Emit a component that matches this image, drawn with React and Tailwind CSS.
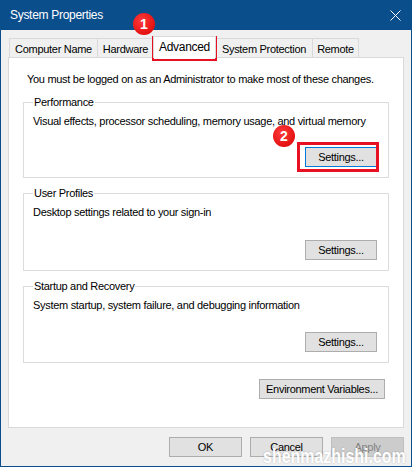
import React from 'react';

function Btn({ children, className = '', focused = false, disabled = false }) {
  return (
    <div
      className={
        'h-[20px] flex items-center justify-center border leading-[15px] whitespace-nowrap ' +
        (disabled
          ? 'bg-[#cccccc] border-[#bfbfbf] text-[#838383] '
          : focused
          ? 'bg-[#e1e1e1] border-[#0078d7] '
          : 'bg-[#e1e1e1] border-[#adadad] ') +
        className
      }
    >
      {children}
    </div>
  );
}

function Group({ title, text, gap, focused }) {
  return (
    <fieldset className="border border-[#dcdcdc] mx-[14px] px-[9px] pb-[10px]">
      <legend className="px-[1px] leading-[15px]">{title}</legend>
      <div className="pt-[4px] leading-[15px] whitespace-nowrap">{text}</div>
      <div className={'flex justify-end pr-[2px] ' + gap}>
        <Btn className="w-[72px]" focused={focused}>
          Settings...
        </Btn>
      </div>
    </fieldset>
  );
}

function Badge({ n, className }) {
  return (
    <div
      className={
        'absolute w-[22px] h-[22px] rounded-full bg-[radial-gradient(circle_at_40%_35%,#ff3b3b,#d80000)] text-white font-bold text-[14px] tracking-normal flex items-center justify-center ' +
        className
      }
    >
      {n}
    </div>
  );
}

export default function App() {
  const tabs = [
    { label: 'Computer Name', w: 'w-[88px]', cls: 'border-l border-t' },
    { label: 'Hardware', w: 'w-[56px]', cls: 'border-l border-t' },
    { label: 'Advanced', w: 'w-[63px]', active: true },
    { label: 'System Protection', w: 'w-[96px]', cls: 'border-t' },
    { label: 'Remote', w: 'w-[47px]', cls: 'border-l border-t border-r' },
  ];

  return (
    <div className="relative w-[412px] h-[467px] overflow-hidden bg-[#0a4e8c] flex flex-col px-px pb-px font-['Liberation_Sans',sans-serif] text-[11px] tracking-[-0.3px] text-black">
      {/* title bar */}
      <div className="h-[30px] shrink-0 flex items-center justify-between pl-[9px] pr-[10px] text-white">
        <span className="text-[12px]">System Properties</span>
        <svg width="11" height="11" viewBox="0 0 11 11" fill="none" stroke="white" strokeWidth="1">
          <path d="M0.5 0.5 L10.5 10.5 M10.5 0.5 L0.5 10.5" />
        </svg>
      </div>

      <div className="flex-1 bg-[#f0f0f0] flex flex-col px-[7px]">
        {/* tabs */}
        <div className="mt-[6px] h-[21px] flex items-end pl-[1px]">
          {tabs.map((t) =>
            t.active ? (
              <div
                key={t.label}
                className={t.w + ' h-[22px] -mb-px relative z-10 bg-white border-x border-t border-[#d9d9d9] flex justify-center pt-[3px] leading-[15px] text-[12px]'}
              >
                {t.label}
              </div>
            ) : (
              <div
                key={t.label}
                className={t.w + ' h-[19px] border-[#d9d9d9] flex justify-center pt-[3px] leading-[15px] ' + t.cls}
              >
                {t.label}
              </div>
            )
          )}
        </div>

        {/* tab page */}
        <div className="w-[396px] h-[371px] bg-white border border-[#d9d9d9] flex flex-col">
          <div className="pt-[14px] pl-[18px] leading-[15px] whitespace-nowrap">
            You must be logged on as an Administrator to make most of these changes.
          </div>
          <div className="mt-[8px] flex flex-col gap-[8px]">
            <Group
              title="Performance"
              text="Visual effects, processor scheduling, memory usage, and virtual memory"
              gap="mt-[18px]"
              focused
            />
            <Group title="User Profiles" text="Desktop settings related to your sign-in" gap="mt-[20px]" />
            <Group
              title="Startup and Recovery"
              text="System startup, system failure, and debugging information"
              gap="mt-[19px]"
            />
          </div>
          <div className="mt-[16px] flex justify-end pr-[18px]">
            <Btn className="w-[126px]">Environment Variables...</Btn>
          </div>
        </div>

        {/* dialog buttons */}
        <div className="mt-[9px] flex justify-end gap-[8px]">
          <Btn className="w-[73px]">OK</Btn>
          <Btn className="w-[73px]">Cancel</Btn>
          <Btn className="w-[73px]" disabled>
            Apply
          </Btn>
        </div>
      </div>

      {/* callouts */}
      <div className="absolute left-[152px] top-[36px] w-[65px] h-[25px] border-2 border-[#e81123]" />
      <Badge n="1" className="left-[133px] top-[13px]" />
      <div className="absolute left-[297px] top-[142px] w-[82px] h-[30px] border-[3px] border-[#e81123]" />
      <Badge n="2" className="left-[273px] top-[125px]" />

      <div className="absolute left-[263px] top-[444px] origin-left scale-x-[0.76] text-white font-bold text-[21px] tracking-normal leading-[23px] [text-shadow:0_0_2px_rgba(0,0,0,0.25)]">
        shenmazhishi.com
      </div>
    </div>
  );
}
